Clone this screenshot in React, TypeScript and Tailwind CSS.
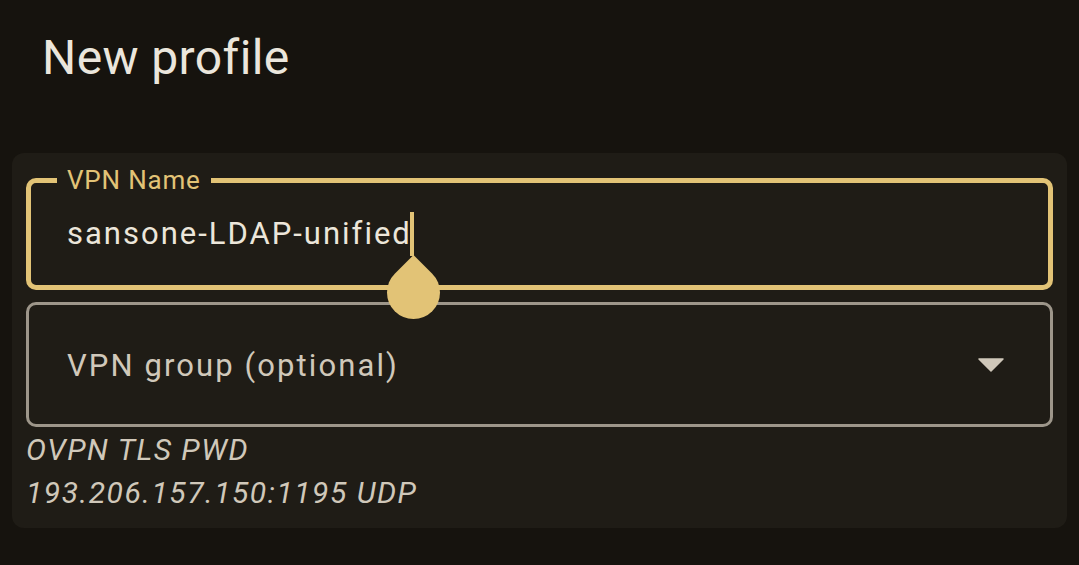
export default function App() {
  return (
    <div className="h-[565px] w-[1079px] overflow-hidden bg-[#16130e] font-['Roboto',sans-serif]">
      <h1 className="pl-[42px] pt-[34px] text-[48px] leading-[48px] font-normal tracking-[0.4px] text-[#ebe6dc]">New profile</h1>
      <div className="mx-[12px] mt-[71px] rounded-[12px] bg-[#1f1c16] px-[14px] pt-[25px] pb-[14px]">
        <div className="relative z-10 flex h-[112px] items-center rounded-[10px] border-[5px] border-[#e2c376] pl-[36px]">
          <span className="absolute -top-[20px] left-[26px] bg-[#1f1c16] px-[10px] text-[26px] leading-[34px] tracking-[0.8px] text-[#e2c376]">
            VPN Name
          </span>
          <span className="text-[31px] leading-[40px] tracking-[2px] text-[#ece6da]">sansone-LDAP-unified</span>
          <span className="-ml-[2px] inline-block h-[44px] w-[4px] bg-[#e2c376]" />
          <div className="absolute left-[356px] top-[83px] h-[53px] w-[53px] rotate-45 rounded-full rounded-tl-none bg-[#e2c376]" />
        </div>
        <div className="mt-[12px] flex h-[125px] items-center justify-between rounded-[10px] border-[3px] border-[#9d968a] pl-[38px] pr-[46px]">
          <span className="pt-[2px] text-[31px] leading-[40px] tracking-[2.1px] text-[#d0c8ba]">VPN group (optional)</span>
          <svg width="26" height="14" viewBox="0 0 26 14">
            <path d="M1 1 L25 1 L13 13 Z" fill="#d0c8ba" stroke="#d0c8ba" strokeWidth="1.5" strokeLinejoin="round" />
          </svg>
        </div>
        <div className="mt-[1px] text-[30px] leading-[43px] italic tracking-[1.5px] text-[#d0c8ba]">
          <p>OVPN TLS PWD</p>
          <p>193.206.157.150:1195 UDP</p>
        </div>
      </div>
    </div>
  );
}
